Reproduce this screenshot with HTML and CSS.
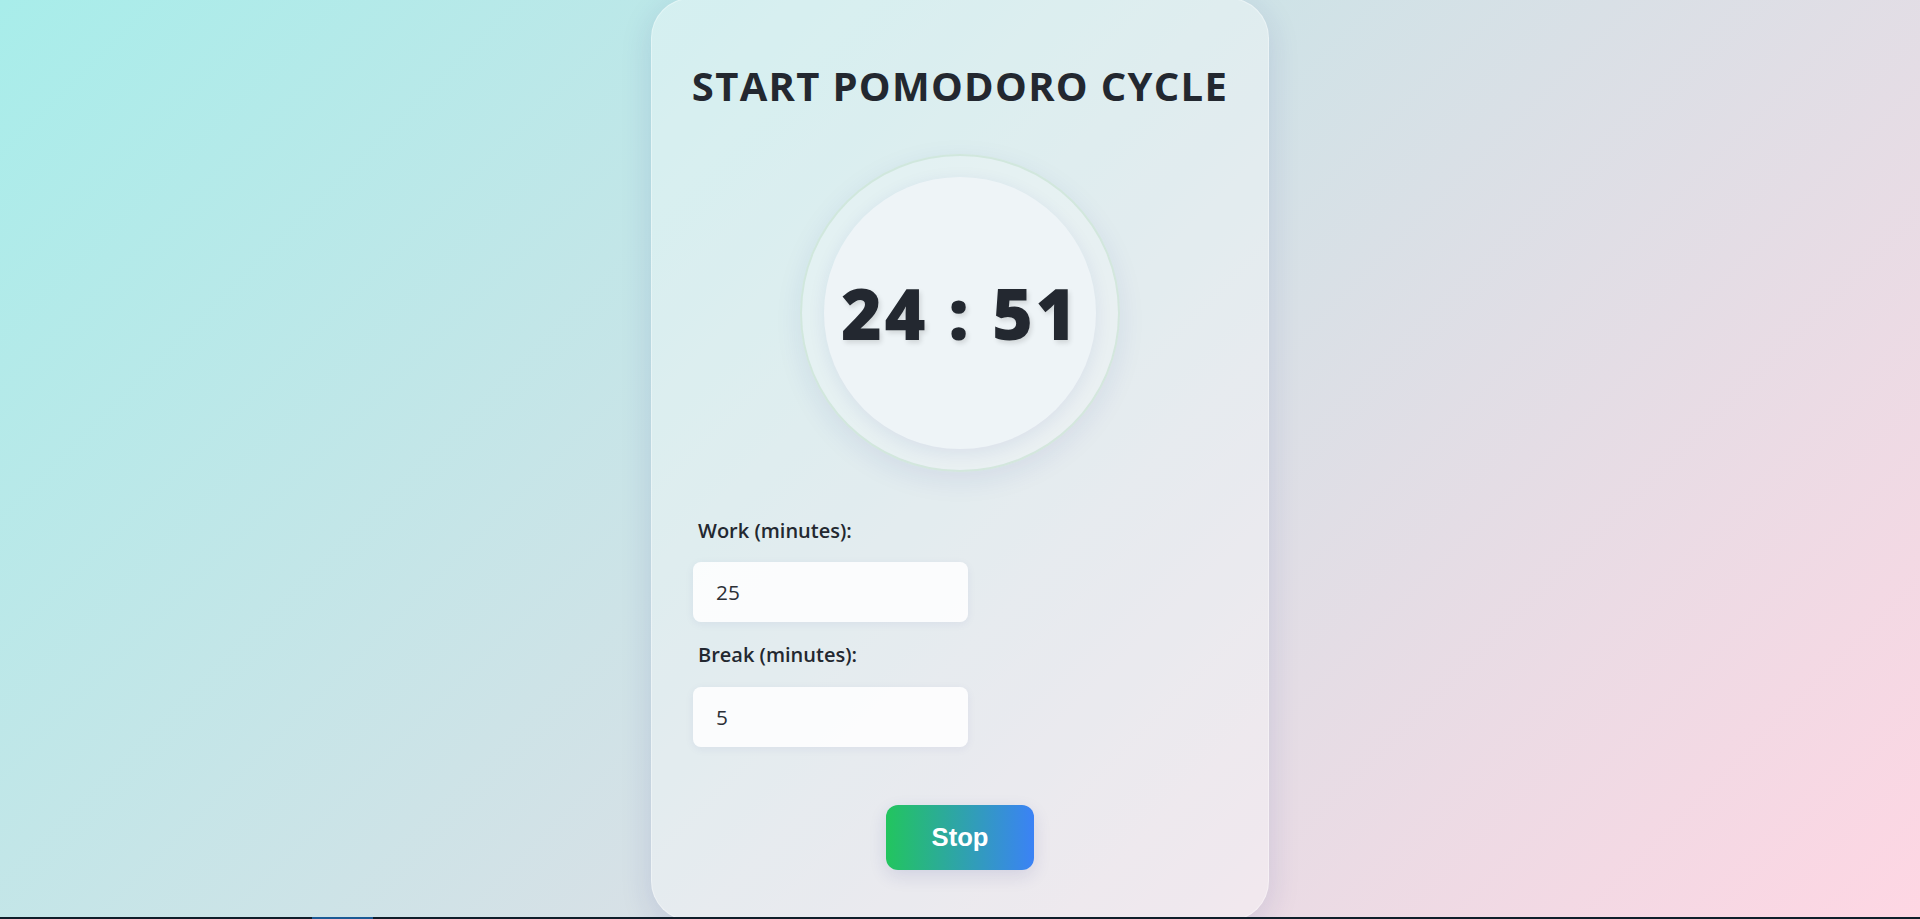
FILE: index.html
```html
<!DOCTYPE html>
<html lang="en">
<head>
<meta charset="utf-8">
<title>Pomodoro</title>
<link rel="stylesheet" href="styles.css">
</head>
<body>
<main class="card">
  <h1 class="title">START POMODORO CYCLE</h1>
  <div class="dial">
    <div class="face">
      <span class="time">24 : 51</span>
    </div>
  </div>
  <form class="settings">
    <label class="label" for="work">Work (minutes):</label>
    <input class="field" id="work" type="number" value="25">
    <label class="label" for="brk">Break (minutes):</label>
    <input class="field field-last" id="brk" type="number" value="5">
  </form>
  <button class="stop" type="button">Stop</button>
</main>
<div class="taskbar"><span class="taskbar-tab"></span></div>
</body>
</html>
```

FILE: styles.css
```css
* { box-sizing: border-box; }

html, body {
  margin: 0;
  height: 100%;
}

body {
  height: 100vh;
  overflow: hidden;
  display: flex;
  justify-content: center;
  align-items: center;
  background: linear-gradient(135deg, #a8edea 0%, #fed6e3 100%);
  font-family: "Open Sans", "Noto Sans", sans-serif;
  color: #232830;
}

.card {
  flex: 0 0 auto;
  width: 618px;
  height: 923px;
  padding: 60px 41px 50px;
  border-radius: 40px;
  background: rgba(255, 255, 255, 0.36);
  border: 1px solid rgba(255, 255, 255, 0.35);
  box-shadow: 0 8px 32px rgba(31, 38, 135, 0.13);
  display: flex;
  flex-direction: column;
  align-items: center;
}

.title {
  margin: 0;
  font-size: 40px;
  font-weight: 700;
  letter-spacing: 1.3px;
  line-height: 1.362;
  color: #232830;
  white-space: nowrap;
}

.dial {
  margin-top: 41px;
  width: 320px;
  height: 320px;
  border-radius: 50%;
  background: rgba(255, 255, 255, 0.22);
  border: 2px solid rgba(190, 222, 200, 0.5);
  box-shadow: 0 8px 28px rgba(31, 38, 135, 0.08);
  display: flex;
  align-items: center;
  justify-content: center;
}

.face {
  width: 272px;
  height: 272px;
  border-radius: 50%;
  background: #eef4f7;
  box-shadow: 0 4px 18px rgba(31, 38, 135, 0.08);
  display: flex;
  align-items: center;
  justify-content: center;
}

.time {
  font-size: 70px;
  font-weight: 800;
  letter-spacing: 2.5px;
  line-height: 1;
  color: #232830;
  text-shadow: 2px 3px 5px rgba(0, 0, 0, 0.12);
  white-space: nowrap;
}

.settings {
  align-self: stretch;
  margin-top: 45px;
  display: flex;
  flex-direction: column;
  align-items: flex-start;
}

.label {
  margin: 0 0 18px 5px;
  font-size: 20px;
  font-weight: 560;
  line-height: 1.362;
  color: #232830;
}

.field {
  width: 275px;
  height: 60px;
  margin: 0 0 19px;
  padding: 0 23px;
  border: none;
  border-radius: 8px;
  background: rgba(255, 255, 255, 0.85);
  box-shadow: 0 2px 10px rgba(31, 38, 135, 0.06);
  font-family: "Open Sans", "Noto Sans", sans-serif;
  font-size: 20.8px;
  color: #2b2f36;
  outline: none;
  -moz-appearance: textfield;
}

.field::-webkit-outer-spin-button,
.field::-webkit-inner-spin-button {
  -webkit-appearance: none;
  margin: 0;
}

.field-last { margin-bottom: 0; }

.stop {
  margin-top: 58px;
  width: 148px;
  height: 66px;
  border: none;
  border-radius: 12px;
  background: linear-gradient(90deg, #22c55e 0%, #3b82f6 100%);
  box-shadow: 0 6px 18px rgba(31, 38, 135, 0.12);
  color: #ffffff;
  font-family: "Liberation Sans", Arial, sans-serif;
  font-weight: 700;
  font-size: 25.6px;
  cursor: pointer;
}

.taskbar {
  position: fixed;
  left: 0;
  right: 0;
  bottom: 0;
  height: 2px;
  background: #0f1e2a;
}

.taskbar-tab {
  position: absolute;
  left: 312px;
  top: 0;
  width: 61px;
  height: 2px;
  background: #1b5a94;
}
```
